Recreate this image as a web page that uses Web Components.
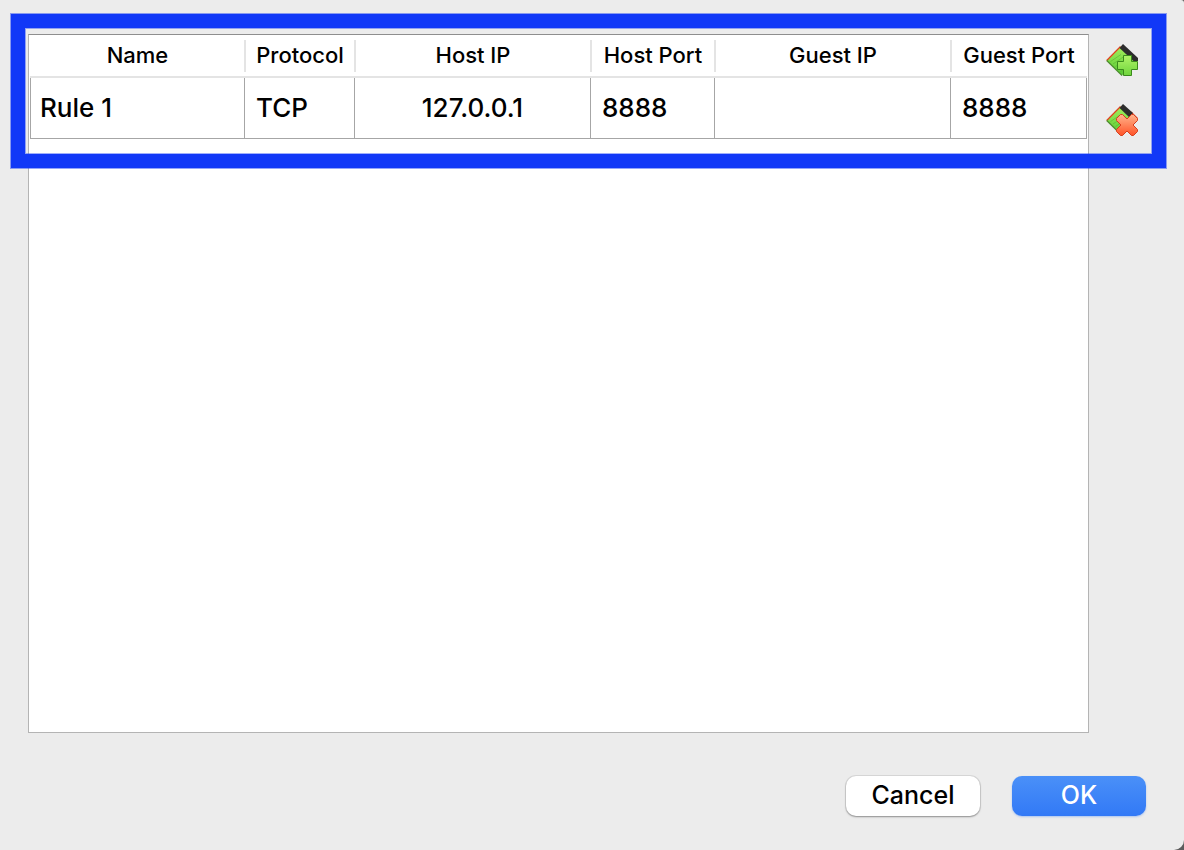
<!DOCTYPE html>
<html lang="en">
<head>
<meta charset="utf-8">
<title>Port Forwarding Rules</title>
<style>
  html { background: #5c5c5c; }
  body { margin: 0; background: #ececec; border-radius: 0 3px 10px 0; font-family: Inter, "Liberation Sans", sans-serif; color: #000; }
</style>
</head>
<body>
<port-dialog>
  <rule-table></rule-table>
  <tool-button slot="tools" kind="add" label="Add rule"></tool-button>
  <tool-button slot="tools" kind="remove" label="Remove rule"></tool-button>
  <dialog-button slot="actions">Cancel</dialog-button>
  <dialog-button slot="actions" primary>OK</dialog-button>
</port-dialog>

<script>
class PortDialog extends HTMLElement {
  constructor() {
    super();
    this.attachShadow({ mode: "open" }).innerHTML = `
      <style>
        :host { display: flex; flex-direction: column; box-sizing: border-box; min-height: 100vh;
          padding: 34px 38px 34px 28px; gap: 43px; position: relative; }
        main { flex: 1; display: flex; gap: 17px; }
        .list { flex: 1; display: flex; min-width: 0; }
        .tools { display: flex; flex-direction: column; gap: 28px; padding: 10px 8px 0 0; }
        footer { display: flex; justify-content: flex-end; gap: 32px; }
        .highlight { position: absolute; top: 14px; left: 11px; right: 18px; height: 154px; box-sizing: border-box;
          border: 14px solid #1138f7; pointer-events: none;
          box-shadow: 0 0 0 1px rgba(17,56,247,.45), inset 0 0 0 1px rgba(17,56,247,.4); }
      </style>
      <main>
        <div class="list"><slot></slot></div>
        <div class="tools"><slot name="tools"></slot></div>
      </main>
      <footer><slot name="actions"></slot></footer>
      <div class="highlight"></div>`;
  }
}

class RuleTable extends HTMLElement {
  constructor() {
    super();
    this.attachShadow({ mode: "open" }).innerHTML = `
      <style>
        :host { display: block; flex: 1; box-sizing: border-box; min-width: 0; background: #fff;
          border: 1px solid #b4b4b4; border-top-color: #8e8e8e; padding: 0 1px; }
        table { width: 100%; table-layout: fixed; border-collapse: separate; border-spacing: 0; }
        .protocol { width: 110px; } .ip { width: 236px; } .host-port { width: 124px; } .guest-port { width: 136px; }
        th { box-sizing: border-box; height: 43px; padding: 0 0 2px; font-size: 22px; line-height: 28px; font-weight: 500;
          white-space: nowrap; border-bottom: 2px solid #e4e4e4;
          background: linear-gradient(#e4e4e4, #e4e4e4) no-repeat right 5px / 1px 32px; }
        th + th { background: linear-gradient(#e4e4e4, #e4e4e4) no-repeat left 5px / 1px 32px,
          linear-gradient(#e4e4e4, #e4e4e4) no-repeat right 5px / 1px 32px; }
        th:last-child { background: linear-gradient(#e4e4e4, #e4e4e4) no-repeat left 5px / 1px 32px; }
        td { box-sizing: border-box; height: 61px; padding: 0 11px; font-size: 26px; line-height: 32px; font-weight: 500;
          border-right: 1px solid #a6a6a6; border-bottom: 1px solid #a6a6a6; white-space: nowrap; }
        td:first-child { border-left: 1px solid #a6a6a6; padding-left: 9px; }
        .address { text-align: center; }
      </style>
      <table>
        <colgroup><col><col class="protocol"><col class="ip"><col class="host-port"><col class="ip"><col class="guest-port"></colgroup>
        <thead><tr><th scope="col">Name</th><th scope="col">Protocol</th><th scope="col">Host IP</th><th scope="col">Host Port</th><th scope="col">Guest IP</th><th scope="col">Guest Port</th></tr></thead>
        <tbody><tr><td>Rule 1</td><td>TCP</td><td class="address">127.0.0.1</td><td>8888</td><td class="address"></td><td>8888</td></tr></tbody>
      </table>`;
  }
}

const CARD = `
  <path d="M.7 16.5 14.5 2.5 29 16 16 31.5Z" fill="url(#card)"/>
  <path d="M4.500 17.500 15 10.500M7 20 18 12.500M9.500 22.500 20 15.500M12 25 22 18M14.500 27.500 24 21" stroke="#4fa82b" stroke-opacity=".6" stroke-width=".8" fill="none"/>
  <path d="M.7 16.5 14.500 2.500" stroke="#e2401c" stroke-width="1.200"/>
  <path d="M.7 16.5 16 31.500" stroke="#4b8d2c" stroke-width="1.200"/>`;
const GRADIENTS = `
  <linearGradient id="card" x1="0" y1="0" x2="0" y2="1"><stop stop-color="#a4ee5c"/><stop offset="1" stop-color="#54c832"/></linearGradient>
  <linearGradient id="plus" x1="0" y1="0" x2="0" y2="1"><stop stop-color="#b0f468"/><stop offset="1" stop-color="#6ed43c"/></linearGradient>
  <linearGradient id="cross" x1="0" y1="0" x2="0" y2="1"><stop stop-color="#ffb48c"/><stop offset="1" stop-color="#ff5428"/></linearGradient>`;
const ICONS = {
  add: `${CARD}
    <path d="M13.500 4 17 0 32 14V17H27.500Z" fill="#2c2c2c"/>
    <path d="M17.500 11.500H25.500V17.500H31.500V25.500H25.500V31.500H17.500V25.500H11.500V17.500H17.500Z" fill="url(#plus)" stroke="#3a8a1c"/>`,
  remove: `${CARD}
    <path d="M25 8 31.500 14.500" stroke="#e2401c" stroke-width="1.200"/>
    <path d="M13.500 4 17 0 27 9 23 13Z" fill="#2c2c2c"/>
    <path d="M14.500 10.500H16.500L21 15 25.500 10.500H27.500L31.500 14.500V16.500L27 21 31.500 25.500V27.500L27.500 31.500H25.500L21 27 16.500 31.500H14.500L10.500 27.500V25.500L15 21 10.500 16.500V14.500Z" fill="url(#cross)" stroke="#d63e1e" stroke-linejoin="round"/>`
};

class ToolButton extends HTMLElement {
  connectedCallback() {
    this.attachShadow({ mode: "open" }).innerHTML = `
      <style>
        :host { display: block; }
        button { display: block; padding: 0; border: 0; background: none; }
        svg { display: block; width: 32px; height: 32px; }
      </style>
      <button type="button" aria-label="${this.getAttribute("label")}">
        <svg viewBox="0 0 32 32" aria-hidden="true"><defs>${GRADIENTS}</defs>${ICONS[this.getAttribute("kind")]}</svg>
      </button>`;
  }
}

class DialogButton extends HTMLElement {
  constructor() {
    super();
    this.attachShadow({ mode: "open" }).innerHTML = `
      <style>
        :host { display: block; }
        button { display: block; box-sizing: border-box; min-width: 134px; height: 40px; padding: 0 16px 2px;
          border: 0; border-radius: 10px; font: inherit; font-size: 25px; line-height: 32px; font-weight: 500;
          color: #000; background: #fff;
          box-shadow: 0 0 0 1px rgba(0,0,0,.08), 0 1px 2px rgba(0,0,0,.35); }
        :host([primary]) button { color: #fff; background: linear-gradient(#4a90f8, #3279f6);
          box-shadow: 0 1px 2px rgba(50,121,246,.35); }
      </style>
      <button type="button"><slot></slot></button>`;
  }
}

customElements.define("port-dialog", PortDialog);
customElements.define("rule-table", RuleTable);
customElements.define("tool-button", ToolButton);
customElements.define("dialog-button", DialogButton);
</script>
</body>
</html>
